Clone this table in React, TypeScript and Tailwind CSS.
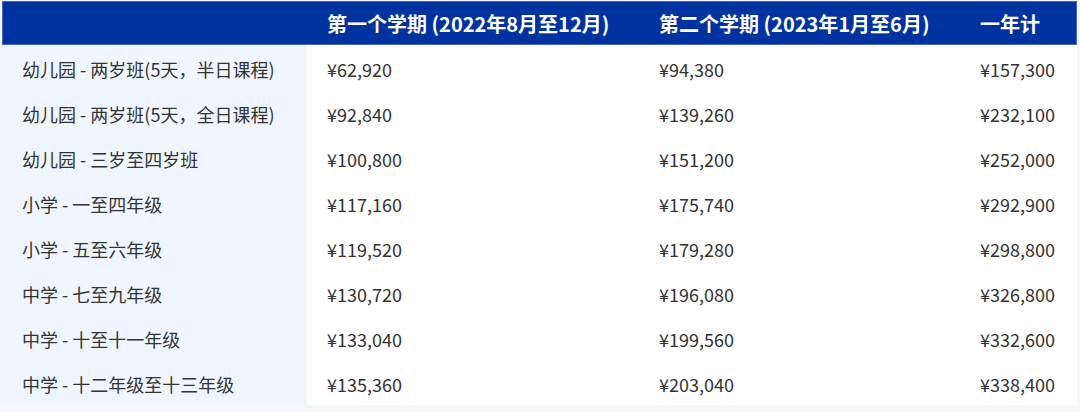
const HEADERS = [
  "",
  "第一个学期 (2022年8月至12月)",
  "第二个学期 (2023年1月至6月)",
  "一年计",
];

const ROWS = [
  ["幼儿园 - 两岁班(5天，半日课程)", "¥62,920", "¥94,380", "¥157,300"],
  ["幼儿园 - 两岁班(5天，全日课程)", "¥92,840", "¥139,260", "¥232,100"],
  ["幼儿园 - 三岁至四岁班", "¥100,800", "¥151,200", "¥252,000"],
  ["小学 - 一至四年级", "¥117,160", "¥175,740", "¥292,900"],
  ["小学 - 五至六年级", "¥119,520", "¥179,280", "¥298,800"],
  ["中学 - 七至九年级", "¥130,720", "¥196,080", "¥326,800"],
  ["中学 - 十至十一年级", "¥133,040", "¥199,560", "¥332,600"],
  ["中学 - 十二年级至十三年级", "¥135,360", "¥203,040", "¥338,400"],
];

const FONT = {
  fontFamily: '"Noto Sans CJK SC", "Noto Sans", sans-serif',
};

export default function App() {
  return (
    <div
      className="w-[1080px] h-[412px] bg-[#f5f7fa] overflow-hidden"
      style={FONT}
    >
      <div className="w-[1077px] pt-[1px]">
        <div className="ml-[2px] h-[44px] bg-[#0033a0] border border-[#4468bd] grid grid-cols-[305px_332px_321px_115px] items-center text-white font-bold text-[20px]">
          {HEADERS.map((h, i) => (
            <div key={i} className="pl-[19px] pt-[2px] leading-none whitespace-nowrap">
              {h}
            </div>
          ))}
        </div>
        {ROWS.map((row) => (
          <div
            key={row[0]}
            className="grid grid-cols-[307px_332px_321px_117px] h-[45px] text-[18px] text-[#333333]"
          >
            <div className="bg-[#f0f6ff] pl-[22px] pt-[4px] flex items-center whitespace-nowrap">
              {row[0]}
            </div>
            {row.slice(1).map((v, i) => (
              <div
                key={i}
                className="bg-white pl-[20px] pt-[4px] flex items-center whitespace-nowrap"
              >
                {v}
              </div>
            ))}
          </div>
        ))}
      </div>
    </div>
  );
}
